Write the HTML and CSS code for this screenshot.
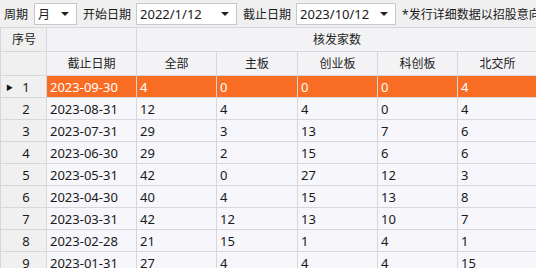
FILE: index.html
```html
<!DOCTYPE html>
<html>
<head>
  <title>核发家数</title>
  <link rel="stylesheet" href="styles.css">
</head>
<body>
  <div class="toolbar">
    <span class="label">周期</span>
    <div class="combo combo-small"><span class="cjk">月</span><i class="caret"></i></div>
    <span class="label">开始日期</span>
    <div class="combo"><span>2022/1/12</span><i class="caret"></i></div>
    <span class="label">截止日期</span>
    <div class="combo combo-end"><span>2023/10/12</span><i class="caret"></i></div>
    <span class="note">*发行详细数据以招股意向书公布日期为准</span>
  </div>

  <table class="grid">
    <colgroup>
      <col class="c-rh"><col class="c-date"><col class="c-n"><col class="c-n2"><col class="c-n"><col class="c-n"><col class="c-n">
    </colgroup>
    <thead>
      <tr><th class="rh left">序号</th><th></th><th colspan="5">核发家数</th></tr>
      <tr><th class="rh"></th><th>截止日期</th><th>全部</th><th>主板</th><th>创业板</th><th>科创板</th><th>北交所</th></tr>
    </thead>
    <tbody id="rows"></tbody>
  </table>

  <script>
    const data = [
      ["2023-09-30", 4, 0, 0, 0, 4],
      ["2023-08-31", 12, 4, 4, 0, 4],
      ["2023-07-31", 29, 3, 13, 7, 6],
      ["2023-06-30", 29, 2, 15, 6, 6],
      ["2023-05-31", 42, 0, 27, 12, 3],
      ["2023-04-30", 40, 4, 15, 13, 8],
      ["2023-03-31", 42, 12, 13, 10, 7],
      ["2023-02-28", 21, 15, 1, 4, 1],
      ["2023-01-31", 27, 4, 4, 4, 15],
      ["2022-12-31", 35, 6, 12, 9, 8]
    ];
    const body = document.getElementById("rows");
    data.forEach((row, i) => {
      body.innerHTML += `<tr class="${i === 0 ? "selected" : ""}">
        <td class="rh">${i === 0 ? '<span class="arrow">▶</span>' : ""}${i + 1}</td>
        ${row.map(v => `<td>${v}</td>`).join("")}
      </tr>`;
    });
  </script>
</body>
</html>
```

FILE: styles.css
```css
html, body {
  margin: 0;
  padding: 0;
  overflow: hidden;
}
body {
  background: #f0f0f0;
  color: #1a1a1a;
  font-family: "Noto Sans", "Noto Sans CJK SC", sans-serif;
  font-size: 13px;
  width: 536px;
  height: 268px;
}
.cjk { font-size: 12px; }
.toolbar {
  display: flex;
  align-items: center;
  height: 27px;
  padding-left: 4px;
  white-space: nowrap;
  background: #f0f0f0;
}
.label {
  font-size: 12px;
  margin-right: 5px;
  flex-shrink: 0;
}
.combo {
  box-sizing: border-box;
  flex-shrink: 0;
  width: 101px;
  height: 22px;
  margin-right: 6px;
  display: flex;
  align-items: center;
  justify-content: space-between;
  padding: 0 7px 0 3px;
  background: #fff;
  border: 1px solid #c8c8c8;
}
.combo-small { width: 43px; margin-left: 1px; }
.combo-end { width: 100px; }
.caret {
  width: 0;
  height: 0;
  border-left: 4px solid transparent;
  border-right: 4px solid transparent;
  border-top: 4px solid #222;
}
.note {
  font-size: 12px;
  overflow: hidden;
}

.grid {
  table-layout: fixed;
  border-collapse: collapse;
  width: 538px;
  background: #f6f6fb;
}
.c-rh { width: 46px; }
.c-date { width: 90px; }
.c-n { width: 80px; }
.c-n2 { width: 81px; }
th, td {
  border: 1px solid #d6d6dc;
  padding: 0 3px;
  line-height: 16px;
  white-space: nowrap;
  overflow: hidden;
}
th {
  height: 23px;
  background: #f3f3f5;
  font-size: 12px;
  font-weight: normal;
  text-align: center;
  color: #222;
}
th.left { text-align: left; padding-left: 4px; }
td { height: 21px; text-align: left; }
td.rh, th.rh {
  background: #f0f0f0;
  text-align: center;
  position: relative;
}
td.rh { padding-left: 8px; }
.arrow {
  position: absolute;
  left: 5px;
  top: 4px;
  font-size: 7px;
  color: #111;
}
tr.selected td:not(.rh) {
  background: #f96c24;
  color: #fff;
}
```
